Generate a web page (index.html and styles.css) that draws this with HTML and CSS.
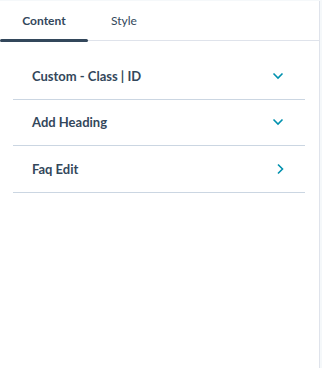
FILE: index.html
```html
<!DOCTYPE html>
<html lang="en">
<head>
  <meta charset="UTF-8">
  <meta name="viewport" content="width=device-width, initial-scale=1.0">
  <title>Module Editor</title>
  <link rel="stylesheet" href="styles.css">
</head>
<body>
  <div class="panel">
    <!-- Tabs -->
    <div class="tabs">
      <div class="tab active">Content</div>
      <div class="tab">Style</div>
    </div>

    <!-- Field groups -->
    <div class="groups">
      <div class="group">
        <span>Custom - Class | ID</span>
        <svg class="chevron" width="12" height="8" viewBox="0 0 12 8"><path d="M1.5 1.5 L6 6 L10.5 1.5" fill="none" stroke="#0091ae" stroke-width="1.6"/></svg>
      </div>
      <div class="group">
        <span>Add Heading</span>
        <svg class="chevron" width="12" height="8" viewBox="0 0 12 8"><path d="M1.5 1.5 L6 6 L10.5 1.5" fill="none" stroke="#0091ae" stroke-width="1.6"/></svg>
      </div>
      <div class="group">
        <span>Faq Edit</span>
        <svg class="chevron right" width="12" height="12" viewBox="0 0 12 12"><path d="M4 1.5 L8.5 6 L4 10.5" fill="none" stroke="#0091ae" stroke-width="1.6"/></svg>
      </div>
    </div>
  </div>
</body>
</html>
```
FILE: styles.css
```css
body {
  font-family: Lato, "Open Sans", sans-serif;
  background-color: #f5f8fa;
  margin: 0;
  padding: 0;
}
.panel {
  width: 319px;
  height: 367px;
  margin-top: 1px;
  background: #fff;
  border-right: 1px solid #dfe3eb;
}
.tabs {
  display: flex;
  height: 39px;
  border-bottom: 1px solid #dfe3eb;
}
.tab {
  display: flex;
  align-items: center;
  justify-content: center;
  font-size: 12px;
  color: #33475b;
}
.tab:first-child {
  width: 88px;
}
.tab:last-child {
  width: 72px;
}
.tab.active {
  font-weight: 700;
  position: relative;
}
.tab.active::after {
  content: "";
  position: absolute;
  left: 0;
  right: 0;
  bottom: -2px;
  height: 3px;
  border-radius: 2px;
  background-color: #33475b;
}
.groups {
  padding: 12px 14px 0 13px;
}
.group {
  display: flex;
  align-items: center;
  justify-content: space-between;
  height: 45.5px;
  padding: 0 21px 0 19px;
  border-bottom: 1px solid #cbd6e2;
  font-size: 13px;
  font-weight: 700;
  color: #33475b;
}
.chevron.right {
  margin-right: -2px;
}
```
